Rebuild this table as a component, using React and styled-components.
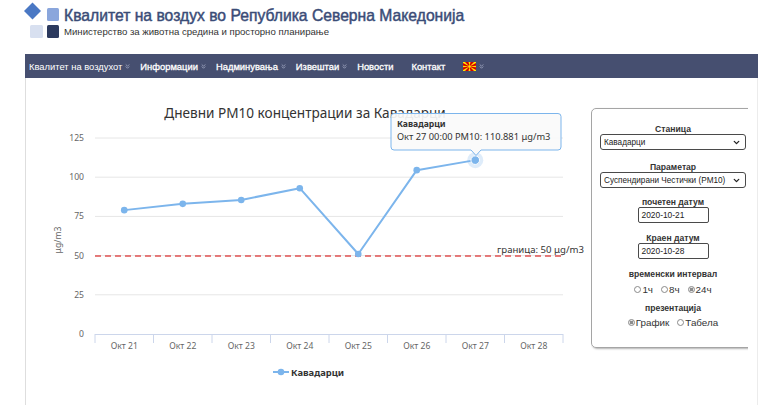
import React from "react";
import styled, { createGlobalStyle } from "styled-components";
import { ChevronsDown, ChevronDown } from "lucide-react";

const Global = createGlobalStyle`
  html, body { margin: 0; padding: 0; background: #fff; }
  body { font-family: "Liberation Sans", Arial, sans-serif; overflow: hidden; }
  * { box-sizing: border-box; }
`;

const Page = styled.div`
  width: 768px;
  height: 405px;
  display: flex;
  flex-direction: column;
`;

const Header = styled.header`
  height: 54px;
  display: flex;
  align-items: flex-start;
  padding: 2px 0 0 22px;
`;

const TitleBlock = styled.div`
  margin-left: 2px;
  display: flex;
  flex-direction: column;
`;

const SiteTitle = styled.h1`
  margin: 4px 0 0;
  font-size: 15.7px;
  line-height: 20px;
  font-weight: normal;
  -webkit-text-stroke: 0.45px #3a4c77;
  color: #3a4c77;
  white-space: nowrap;
`;

const SiteSub = styled.div`
  font-size: 9.6px;
  line-height: 12px;
  color: #333;
  white-space: nowrap;
`;

const Nav = styled.nav`
  margin: 0 10px 0 25px;
  height: 24px;
  background: #464f70;
  display: flex;
  align-items: center;
  gap: 9px;
  padding-left: 4px;
`;

const NavItem = styled.div`
  display: flex;
  align-items: center;
  color: #fff;
  font-size: 9.4px;
  -webkit-text-stroke: ${(p) => (p.$light ? "0" : "0.3px #fff")};
  white-space: nowrap;
`;

const NavChevron = styled(ChevronsDown)`
  margin-left: 2px;
  color: #9ea5bf;
  visibility: ${(p) => (p.$hidden ? "hidden" : "visible")};
`;

const Content = styled.main`
  margin: 0 10px 0 25px;
  flex: 1;
  display: flex;
  border-left: 1px solid #dedede;
  border-right: 1px solid #ececec;
`;

const ChartCol = styled.section`
  width: 565px;
  flex: none;
`;

const SideCol = styled.aside`
  width: 157px;
  flex: none;
  overflow: hidden;
  padding-top: 30px;
`;

const Panel = styled.div`
  width: 164px;
  height: 240px;
  border: 1px solid #a5a5a5;
  border-radius: 5px;
  box-shadow: 1px 1px 2px rgba(0, 0, 0, 0.3);
  padding: 15px 9px 0 9px;
  display: flex;
  flex-direction: column;
  align-items: center;
`;

const Label = styled.div`
  font-size: 8.6px;
  font-weight: bold;
  line-height: 10px;
  color: #333;
  margin-top: ${(p) => p.$mt || 0}px;
  white-space: nowrap;
`;

const FakeSelect = styled.div`
  width: 146px;
  height: 16px;
  border: 1px solid #4a4a4a;
  border-radius: 3px;
  display: flex;
  align-items: center;
  justify-content: space-between;
  padding: 0 4px 0 3px;
  font-size: 8.2px;
  color: #222;
  white-space: nowrap;
`;

const DateInput = styled.div`
  width: 71px;
  height: 16px;
  border: 1px solid #4a4a4a;
  border-radius: 2px;
  display: flex;
  align-items: center;
  padding-left: 3px;
  font-size: 8.4px;
  color: #222;
`;

const RadioRow = styled.div`
  display: flex;
  gap: 8px;
  margin-top: ${(p) => p.$mt || 0}px;
  height: 12px;
  align-items: center;
`;

const RadioOpt = styled.div`
  display: flex;
  align-items: center;
  font-size: 9.8px;
  color: #333;
  gap: 1px;
`;

const RadioDot = styled.span`
  width: 7px;
  height: 7px;
  border-radius: 50%;
  border: 1px solid #8a8a8a;
  background: ${(p) => (p.$on ? "radial-gradient(circle, #8d8d8d 45%, #e8e8e8 55%)" : "#fff")};
  display: inline-block;
`;

const ChartSvg = styled.svg`
  display: block;
  font-family: "Noto Sans", "Open Sans", "DejaVu Sans", sans-serif;
`;

const Flag = () => (
  <svg width="13" height="9" viewBox="0 0 26 18">
    <rect width="26" height="18" fill="#d20000" />
    <g fill="#ffe600">
      <polygon points="0,0 4,0 13,9 0,2" />
      <polygon points="26,0 22,0 13,9 26,2" />
      <polygon points="0,18 4,18 13,9 0,16" />
      <polygon points="26,18 22,18 13,9 26,16" />
      <polygon points="11,0 15,0 13,9" />
      <polygon points="11,18 15,18 13,9" />
      <polygon points="0,7.5 0,10.5 13,9" />
      <polygon points="26,7.5 26,10.5 13,9" />
      <circle cx="13" cy="9" r="3.2" stroke="#d20000" strokeWidth="0.8" />
    </g>
  </svg>
);

const Logo = () => (
  <svg width="40" height="38" viewBox="0 0 40 38">
    <polygon points="10.5,0.5 19,9 10.5,17.5 2,9" fill="#4a78c4" />
    <rect x="25" y="6" width="12" height="13" rx="1.5" fill="#8aa6dc" />
    <rect x="8" y="23" width="13" height="13" rx="1.5" fill="#d8e0f0" />
    <rect x="25" y="23" width="12" height="13" rx="1.5" fill="#2c3a5e" />
  </svg>
);

const cats = ["Окт 21", "Окт 22", "Окт 23", "Окт 24", "Окт 25", "Окт 26", "Окт 27", "Окт 28"];
const vals = [79, 83, 85.5, 93, 51, 104.5, 110.881];
const X0 = 95;
const X1 = 563;
const STEP = (X1 - X0) / 8;
const yOf = (v) => 334 - v * 1.568;
const xOf = (i) => X0 + STEP * (i + 0.5);

const Chart = () => {
  const pts = vals.map((v, i) => [xOf(i), yOf(v)]);
  return (
    <ChartSvg width="565" height="327" viewBox="26 78 565 327">
      <text x="305" y="117.5" textAnchor="middle" fontSize="13.6" fill="#333">
        Дневни PM10 концентрации за Кавадарци
      </text>
      {[125, 100, 75, 50, 25].map((v) => (
        <line key={v} x1={X0} x2={X1} y1={yOf(v)} y2={yOf(v)} stroke="#e6e6e6" strokeWidth="1" />
      ))}
      {[125, 100, 75, 50, 25, 0].map((v) => (
        <text key={v} x="84" y={yOf(v) + 3} textAnchor="end" fontSize="8.6" fill="#666">
          {v}
        </text>
      ))}
      <text x="61" y="240" textAnchor="middle" fontSize="8.6" fill="#666" transform="rotate(-90 61 240)">
        μg/m3
      </text>
      <line x1={X0} x2={X1} y1="334.5" y2="334.5" stroke="#ccd6eb" />
      {Array.from({ length: 9 }).map((_, i) => (
        <line key={i} x1={X0 + STEP * i} x2={X0 + STEP * i} y1="334" y2="343" stroke="#ccd6eb" />
      ))}
      {cats.map((c, i) => (
        <text key={c} x={xOf(i)} y="349" textAnchor="middle" fontSize="8.6" fill="#666">
          {c}
        </text>
      ))}
      <line x1={X0} x2={X1} y1="256" y2="256" stroke="#e05252" strokeWidth="1.4" strokeDasharray="6 4" />
      <text x="584" y="253" textAnchor="end" fontSize="9.6" fill="#333">
        граница: 50 μg/m3
      </text>
      <polyline
        points={pts.map((p) => p.join(",")).join(" ")}
        fill="none"
        stroke="#7cb5ec"
        strokeWidth="2"
        strokeLinejoin="round"
      />
      {pts.slice(0, 6).map((p, i) => (
        <circle key={i} cx={p[0]} cy={p[1]} r="3.3" fill="#7cb5ec" />
      ))}
      <circle cx={pts[6][0]} cy={pts[6][1]} r="8" fill="#7cb5ec" opacity="0.25" />
      <circle cx={pts[6][0]} cy={pts[6][1]} r="4.3" fill="#7cb5ec" stroke="#fff" strokeWidth="1" />
      <path
        d="M394 113.5 H558 a3 3 0 0 1 3 3 V147 a3 3 0 0 1 -3 3 H481 L476 155.5 L471 150 H394 a3 3 0 0 1 -3 -3 V116.5 a3 3 0 0 1 3 -3 Z"
        fill="rgba(250,250,250,0.92)"
        stroke="#7cb5ec"
        strokeWidth="1"
      />
      <text x="397" y="127" fontSize="8.6" fontWeight="bold" fill="#333">
        Кавадарци
      </text>
      <text x="397" y="139.5" fontSize="9.3" fill="#333">
        Окт 27 00:00 PM10: 110.881 μg/m3
      </text>
      <line x1="273" x2="289" y1="372" y2="372" stroke="#7cb5ec" strokeWidth="2" />
      <circle cx="281" cy="372" r="3.3" fill="#7cb5ec" />
      <text x="291" y="375.5" fontSize="9.4" fontWeight="bold" fill="#333">
        Кавадарци
      </text>
    </ChartSvg>
  );
};

const navItems = [
  { t: "Квалитет на воздухот", sub: true, light: true },
  { t: "Информации", sub: true },
  { t: "Надминувања", sub: true },
  { t: "Извештаи", sub: true },
  { t: "Новости", sub: false },
  { t: "Контакт", sub: false },
];

export default function App() {
  return (
    <Page>
      <Global />
      <Header>
        <Logo />
        <TitleBlock>
          <SiteTitle>Квалитет на воздух во Република Северна Македонија</SiteTitle>
          <SiteSub>Министерство за животна средина и просторно планирање</SiteSub>
        </TitleBlock>
      </Header>
      <Nav>
        {navItems.map((n) => (
          <NavItem key={n.t} $light={n.light}>
            {n.t}
            <NavChevron size={7} strokeWidth={3} $hidden={!n.sub} />
          </NavItem>
        ))}
        <NavItem>
          <Flag />
          <NavChevron size={7} strokeWidth={3} />
        </NavItem>
      </Nav>
      <Content>
        <ChartCol>
          <Chart />
        </ChartCol>
        <SideCol>
          <Panel>
            <Label>Станица</Label>
            <FakeSelect>
              Кавадарци
              <ChevronDown size={9} strokeWidth={3.5} />
            </FakeSelect>
            <Label $mt={12}>Параметар</Label>
            <FakeSelect>
              Суспендирани Честички (PM10)
              <ChevronDown size={9} strokeWidth={3.5} />
            </FakeSelect>
            <Label $mt={9}>почетен датум</Label>
            <DateInput>2020-10-21</DateInput>
            <Label $mt={10}>Краен датум</Label>
            <DateInput>2020-10-28</DateInput>
            <Label $mt={10}>временски интервал</Label>
            <RadioRow $mt={4}>
              <RadioOpt><RadioDot />1ч</RadioOpt>
              <RadioOpt><RadioDot />8ч</RadioOpt>
              <RadioOpt><RadioDot $on />24ч</RadioOpt>
            </RadioRow>
            <Label $mt={8}>презентација</Label>
            <RadioRow $mt={3}>
              <RadioOpt><RadioDot $on />График</RadioOpt>
              <RadioOpt><RadioDot />Табела</RadioOpt>
            </RadioRow>
          </Panel>
        </SideCol>
      </Content>
    </Page>
  );
}
